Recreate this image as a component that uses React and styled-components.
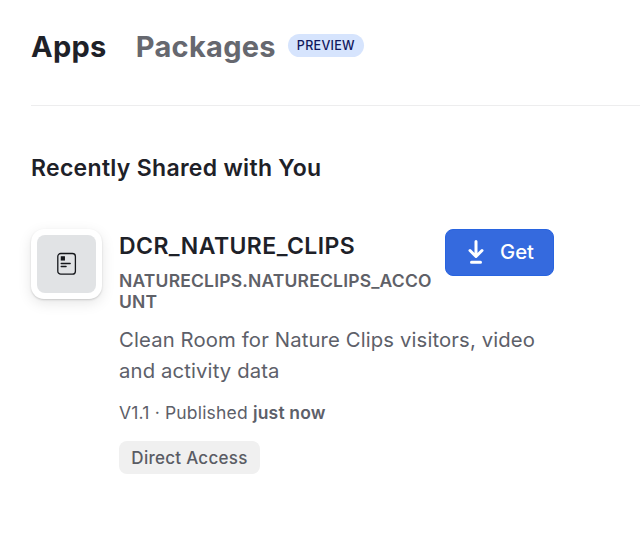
import React from "react";
import styled, { createGlobalStyle } from "styled-components";

const GlobalStyle = createGlobalStyle`
  body { margin: 0; background: #fff; font-family: Inter, sans-serif; color: #1e2128; }
  h1, h2, h3, p { margin: 0; }
`;
const Page = styled.main`
  width: 640px; height: 537px; overflow: hidden; box-sizing: border-box; padding-left: 31px;
`;
const Tabs = styled.nav`
  display: flex; align-items: center; height: 106px; box-sizing: border-box; padding-bottom: 12px;
  border-bottom: 1px solid #ededee;
`;
const Tab = styled.h1`
  font-size: 29px; line-height: 36px; font-weight: 700; letter-spacing: .3px;
  color: ${(p) => (p.$active ? "#1e2128" : "#66686f")}; margin-right: ${(p) => p.$gap}px; white-space: nowrap;
`;
const Badge = styled.span`
  display: flex; align-items: center; justify-content: center; width: 76px; height: 23px; border-radius: 12px;
  background: #d6e4fd; color: #10175c; font-size: 12.5px; font-weight: 500; letter-spacing: .3px; margin-bottom: 2px;
`;
const SectionTitle = styled.h2`
  font-size: 23px; line-height: 28px; font-weight: 600; letter-spacing: .3px; padding-top: 48px; white-space: nowrap;
`;
const Listing = styled.article`
  display: flex; align-items: flex-start; margin-top: 47px;
`;
const AppIcon = styled.div`
  width: 71px; height: 70px; box-sizing: border-box; padding: 6px; border-radius: 13px; background: #fff;
  box-shadow: 0 1px 2px rgba(0,0,0,.16), 0 4px 14px rgba(0,0,0,.1); margin-right: 17px; flex: none;
`;
const IconSurface = styled.div`
  height: 100%; border-radius: 8px; background: #e1e3e5; display: flex; align-items: center; justify-content: center;
`;
const Details = styled.div` width: 326px; flex: none; `;
const Name = styled.h3`
  font-size: 23px; line-height: 28px; font-weight: 600; letter-spacing: .43px; padding-top: 3px; white-space: nowrap;
`;
const Account = styled.p`
  font-size: 17.5px; line-height: 21px; font-weight: 600; letter-spacing: .18px; color: #5f6168;
  margin-top: 10px; white-space: nowrap;
`;
const Description = styled.p`
  font-size: 20.3px; line-height: 31px; letter-spacing: .13px; color: #5d6069; margin-top: 12px; white-space: nowrap;
`;
const Meta = styled.p`
  font-size: 17.5px; line-height: 22px; letter-spacing: .18px; color: #5d6069; margin-top: 16px; white-space: nowrap;
`;
const Strong = styled.strong` font-weight: 600; `;
const Tag = styled.span`
  display: flex; align-items: center; justify-content: center; width: 141px; height: 33px; margin-top: 17px;
  border-radius: 8px; background: #f0f0f0; color: #5a5c64; font-size: 17px; font-weight: 500; letter-spacing: .27px;
`;
const GetButton = styled.button`
  display: flex; align-items: center; gap: 16px; width: 109px; height: 47px; box-sizing: border-box; padding: 0 0 2px 22px;
  border: 1px solid #2864e0; border-radius: 8px; background: #356ade; color: #fff; font: 500 20.3px Inter, sans-serif;
`;

export default function App() {
  return (
    <Page>
      <GlobalStyle />
      <Tabs>
        <Tab $active $gap={29}>Apps</Tab>
        <Tab $gap={12}>Packages</Tab>
        <Badge>PREVIEW</Badge>
      </Tabs>
      <SectionTitle>Recently Shared with You</SectionTitle>
      <Listing>
        <AppIcon>
          <IconSurface>
            <svg width="20" height="24" viewBox="0 0 20 24" fill="none" stroke="#15171b" strokeWidth="1.3" strokeLinecap="round">
              <rect x="0.8" y="1.5" width="17.6" height="20.7" rx="3" />
              <rect x="4.4" y="4.9" width="2.9" height="3" fill="#15171b" />
              <path d="M4.200 11.500h9M4.200 14.500h4.900" />
            </svg>
          </IconSurface>
        </AppIcon>
        <Details>
          <Name>DCR_NATURE_CLIPS</Name>
          <Account>NATURECLIPS.NATURECLIPS_ACCO<br />UNT</Account>
          <Description>Clean Room for Nature Clips visitors, video<br />and activity data</Description>
          <Meta>V1.1 · Published <Strong>just now</Strong></Meta>
          <Tag>Direct Access</Tag>
        </Details>
        <GetButton>
          <svg width="16" height="26" viewBox="0 0 16 26" fill="none" stroke="#fff" strokeWidth="3" strokeLinecap="round" strokeLinejoin="round">
            <path d="M8 2.500v14M2 11.500l6 6 6-6M3.500 23.200h9" />
          </svg>
          Get
        </GetButton>
      </Listing>
    </Page>
  );
}
